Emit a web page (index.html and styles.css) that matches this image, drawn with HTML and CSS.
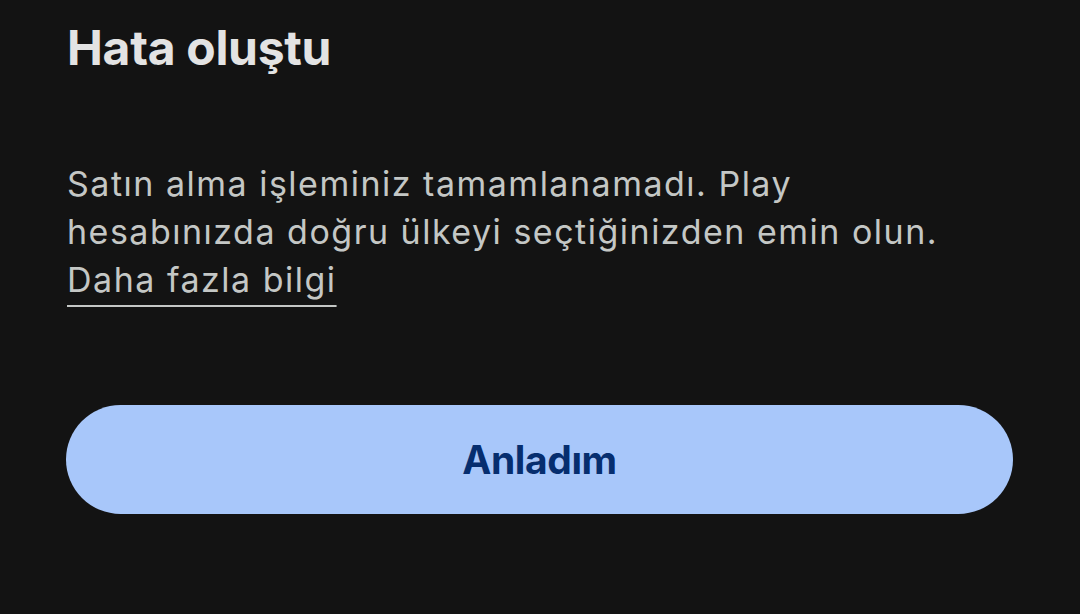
FILE: index.html
```html
<!DOCTYPE html>
<html lang="tr">
<head>
    <meta charset="UTF-8">
    <meta name="viewport" content="width=device-width, initial-scale=1.0">
    <title>Hata oluştu</title>
    <link rel="stylesheet" href="styles.css">
</head>
<body>
    <div class="dialog">
        <h1 class="dialog-title">Hata oluştu</h1>
        <p class="dialog-text">
            Satın alma işleminiz tamamlanamadı. Play hesabınızda doğru ülkeyi seçtiğinizden emin olun.
            <a href="#" class="dialog-link">Daha fazla bilgi</a>
        </p>
        <button class="dialog-button">Anladım</button>
    </div>
</body>
</html>
```

FILE: styles.css
```css
* {
    margin: 0;
    padding: 0;
    box-sizing: border-box;
}

html, body {
    height: 100%;
}

body {
    font-family: Inter, "Noto Sans", sans-serif;
    background-color: #131313;
    overflow: hidden;
}

.dialog {
    padding: 19px 67px 0 66px;
    display: flex;
    flex-direction: column;
}

.dialog-title {
    font-size: 48px;
    font-weight: 700;
    line-height: 58px;
    letter-spacing: -0.3px;
    color: #e3e3e3;
    padding-left: 1px;
}

.dialog-text {
    margin-top: 83px;
    max-width: 900px;
    font-size: 34px;
    line-height: 48px;
    letter-spacing: 1.5px;
    color: #c4c7c5;
    padding-left: 1px;
}

.dialog-link {
    display: block;
    width: fit-content;
    color: #c4c7c5;
    text-decoration: underline;
    text-decoration-thickness: 2px;
    text-underline-offset: 13px;
}

.dialog-button {
    margin-top: 101px;
    width: 947px;
    height: 109px;
    border: none;
    border-radius: 55px;
    background: #a8c7fa;
    color: #062e6f;
    font-family: Inter, "Noto Sans", sans-serif;
    font-size: 39px;
    font-weight: 700;
    letter-spacing: -0.4px;
}
```
